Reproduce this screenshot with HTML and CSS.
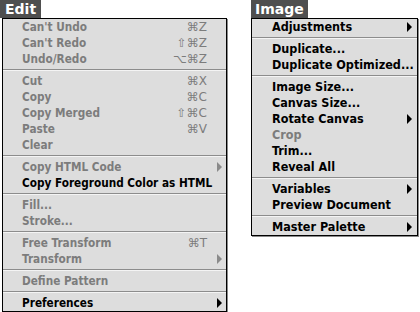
FILE: index.html
```html
<!DOCTYPE html>
<html lang="en">
<head>
    <meta charset="UTF-8">
    <title>Edit and Image menus</title>
    <link rel="stylesheet" href="styles.css">
</head>
<body>

<div class="page">
    <div class="menu edit">
        <div class="tab">Edit</div>
        <div class="box">
            <div class="row off"><span>Can't Undo</span><span class="key">⌘Z</span></div>
            <div class="row off"><span>Can't Redo</span><span class="key">⇧⌘Z</span></div>
            <div class="row off"><span>Undo/Redo</span><span class="key">⌥⌘Z</span></div>
            <div class="sep"></div>
            <div class="row off"><span>Cut</span><span class="key">⌘X</span></div>
            <div class="row off"><span>Copy</span><span class="key">⌘C</span></div>
            <div class="row off"><span>Copy Merged</span><span class="key">⇧⌘C</span></div>
            <div class="row off"><span>Paste</span><span class="key">⌘V</span></div>
            <div class="row off"><span>Clear</span></div>
            <div class="sep"></div>
            <div class="row off sub"><span>Copy HTML Code</span><span class="arrow"></span></div>
            <div class="row"><span>Copy Foreground Color as HTML</span></div>
            <div class="sep"></div>
            <div class="row off"><span>Fill...</span></div>
            <div class="row off"><span>Stroke...</span></div>
            <div class="sep"></div>
            <div class="row off"><span>Free Transform</span><span class="key">⌘T</span></div>
            <div class="row off sub"><span>Transform</span><span class="arrow"></span></div>
            <div class="sep"></div>
            <div class="row off"><span>Define Pattern</span></div>
            <div class="sep"></div>
            <div class="row sub"><span>Preferences</span><span class="arrow"></span></div>
        </div>
    </div>

    <div class="menu image">
        <div class="tab">Image</div>
        <div class="box">
            <div class="row sub"><span>Adjustments</span><span class="arrow"></span></div>
            <div class="sep"></div>
            <div class="row"><span>Duplicate...</span></div>
            <div class="row"><span>Duplicate Optimized...</span></div>
            <div class="sep"></div>
            <div class="row"><span>Image Size...</span></div>
            <div class="row"><span>Canvas Size...</span></div>
            <div class="row sub"><span>Rotate Canvas</span><span class="arrow"></span></div>
            <div class="row off"><span>Crop</span></div>
            <div class="row"><span>Trim...</span></div>
            <div class="row"><span>Reveal All</span></div>
            <div class="sep"></div>
            <div class="row sub"><span>Variables</span><span class="arrow"></span></div>
            <div class="row"><span>Preview Document</span></div>
            <div class="sep"></div>
            <div class="row sub"><span>Master Palette</span><span class="arrow"></span></div>
        </div>
    </div>
</div>

</body>
</html>
```

FILE: styles.css
```css
body {
    margin: 0;
    background: #fff;
    font-family: "DejaVu Sans Condensed", "Liberation Sans", sans-serif;
}
.page {
    display: flex;
    align-items: flex-start;
}
.menu {
    display: flex;
    flex-direction: column;
    align-items: flex-start;
}
.edit {
    width: 228px;
}
.image {
    margin-left: 22px;
    width: 169px;
}
.tab {
    background: #4f4f4f;
    color: #fff;
    font-family: "DejaVu Sans", sans-serif;
    font-weight: bold;
    font-size: 14px;
    height: 18px;
    line-height: 18px;
    padding: 0 5px;
}
.image .tab {
    margin-left: 1px;
    padding: 0 4px;
}
.box {
    background: #dddddd;
    border: 1px solid #000;
    box-sizing: border-box;
    width: 100%;
    box-shadow: 1px 1px 0 #8a8a8a;
}
.edit .box {
    margin-left: 2px;
    width: 225px;
}
.image .box {
    margin-left: 1px;
    width: 167px;
}
.row {
    height: 16px;
    line-height: 16px;
    display: flex;
    justify-content: space-between;
    align-items: center;
    padding: 0 19px 0 19px;
    font-size: 11.7px;
    font-weight: bold;
    color: #000;
    white-space: nowrap;
}
.image .row {
    font-size: 12.5px;
    padding-left: 20px;
}
.row.sub {
    padding-right: 4px;
}
.image .row.sub {
    padding-right: 5px;
}
.off {
    color: #7c7c7c;
}
.key {
    font-family: "DejaVu Sans", sans-serif;
    font-weight: normal;
    font-size: 12px;
}
.arrow {
    width: 0;
    height: 0;
    border-top: 5px solid transparent;
    border-bottom: 5px solid transparent;
    border-left: 5px solid #000;
}
.off .arrow {
    border-left-color: #8a8a8a;
}
.sep {
    height: 6px;
    display: flex;
    flex-direction: column;
    justify-content: center;
}
.sep::before {
    content: "";
    display: block;
    border-top: 1px solid #8c8c8c;
    border-bottom: 1px solid #f4f4f4;
}
```
